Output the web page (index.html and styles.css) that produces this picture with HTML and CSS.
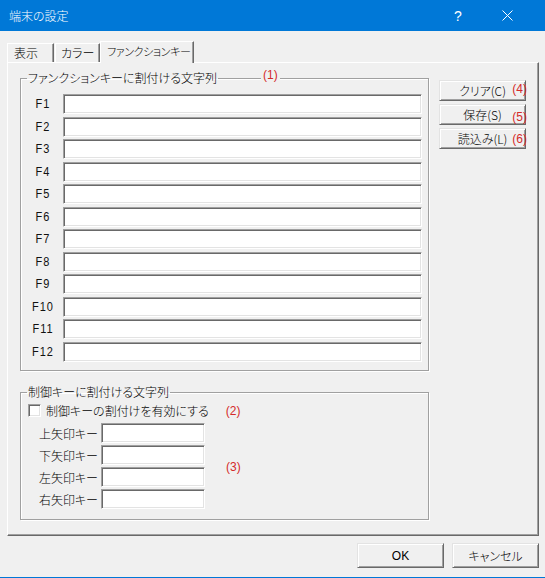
FILE: index.html
```html
<!DOCTYPE html>
<html lang="ja">
<head>
<meta charset="utf-8">
<title>端末の設定</title>
<link rel="stylesheet" href="styles.css">
</head>
<body>
<div class="window">
  <div class="titlebar">
    <span class="title">端末の設定</span>
    <span class="ctl help">?</span>
    <span class="ctl close"><svg width="11" height="11" viewBox="0 0 11 11"><path d="M0.5 0.5 L10.5 10.5 M10.5 0.5 L0.5 10.5" stroke="#fff" stroke-width="1" fill="none"/></svg></span>
  </div>
  <div class="tabs">
    <div class="tab t1">表示</div>
    <div class="tab t2">カラー</div>
    <div class="tab t3 active">ファンクションキー</div>
  </div>
  <div class="panel">
    <div class="leftcol">
      <fieldset class="group g1">
        <legend>ファンクションキーに割付ける文字列</legend>
        <span class="note n1">(1)</span>
        <div class="frows">
          <div class="frow"><span class="flabel">F1</span><span class="edit fedit"></span></div>
          <div class="frow"><span class="flabel">F2</span><span class="edit fedit"></span></div>
          <div class="frow"><span class="flabel">F3</span><span class="edit fedit"></span></div>
          <div class="frow"><span class="flabel">F4</span><span class="edit fedit"></span></div>
          <div class="frow"><span class="flabel">F5</span><span class="edit fedit"></span></div>
          <div class="frow"><span class="flabel">F6</span><span class="edit fedit"></span></div>
          <div class="frow"><span class="flabel">F7</span><span class="edit fedit"></span></div>
          <div class="frow"><span class="flabel">F8</span><span class="edit fedit"></span></div>
          <div class="frow"><span class="flabel">F9</span><span class="edit fedit"></span></div>
          <div class="frow"><span class="flabel">F10</span><span class="edit fedit"></span></div>
          <div class="frow"><span class="flabel">F11</span><span class="edit fedit"></span></div>
          <div class="frow"><span class="flabel">F12</span><span class="edit fedit"></span></div>
        </div>
      </fieldset>
      <fieldset class="group g2">
        <legend>制御キーに割付ける文字列</legend>
        <div class="checkrow">
          <span class="checkbox"></span>
          <span class="checktext">制御キーの割付けを有効にする</span>
          <span class="note n2">(2)</span>
        </div>
        <div class="arrowblock">
          <div class="arows">
            <div class="arow"><span class="alabel">上矢印キー</span><span class="edit aedit"></span></div>
            <div class="arow"><span class="alabel">下矢印キー</span><span class="edit aedit"></span></div>
            <div class="arow"><span class="alabel">左矢印キー</span><span class="edit aedit"></span></div>
            <div class="arow"><span class="alabel">右矢印キー</span><span class="edit aedit"></span></div>
          </div>
          <span class="note n3">(3)</span>
        </div>
      </fieldset>
    </div>
    <div class="rightcol">
      <div class="btn side">クリア(C)<span class="note bn b4">(4)</span></div>
      <div class="btn side">保存(S)<span class="note bn b5">(5)</span></div>
      <div class="btn side">読込み(L)<span class="note bn b6">(6)</span></div>
    </div>
  </div>
  <div class="footer">
    <div class="btn foot">OK</div>
    <div class="btn foot">キャンセル</div>
  </div>
</div>
</body>
</html>
```
FILE: styles.css
```css
* { box-sizing: border-box; }
html, body { margin: 0; padding: 0; }
body {
  font-family: "Noto Sans CJK JP", "Noto Sans", sans-serif;
  font-size: 12px;
  font-weight: 300;
  font-feature-settings: "palt";
  color: #000;
  background: #f0f0f0;
}
.window {
  width: 545px;
  height: 578px;
  background: #f0f0f0;
  border-bottom: 1px solid #0078d7;
  display: flex;
  flex-direction: column;
}
.titlebar {
  height: 31px;
  background: #0078d7;
  color: #fff;
  display: flex;
  align-items: center;
  flex: none;
}
.title {
  margin-left: 9px;
  font-size: 12px;
  flex: 1;
  line-height: 14px;
}
.ctl { display: flex; align-items: center; justify-content: center; }
.help { width: 14px; font-family: "Liberation Sans", sans-serif; font-size: 14px; font-weight: 400; margin-right: 37px; }
.close { width: 11px; margin-right: 32px; }
.tabs {
  display: flex;
  align-items: flex-end;
  height: 31px;
  padding-left: 7px;
  flex: none;
}
.tab {
  height: 19px;
  border-top: 1px solid #fff;
  border-left: 1px solid #fff;
  border-right: 1px solid #696969;
  box-shadow: inset -1px 0 #a0a0a0;
  line-height: 17px;
  padding-left: 6px;
  font-size: 12px;
  white-space: nowrap;
}
.t1 { width: 47px; }
.t2 { width: 45px; margin-left: 1px; padding-left: 5px; }
.t3 {
  width: 94px;
  height: 22px;
  margin-bottom: -1px;
  background: #f0f0f0;
  position: relative;
  z-index: 2;
  padding-left: 6px;
  line-height: 19px;
  font-size: 11px;
  letter-spacing: -0.4px;
}
.panel {
  margin-left: 7px;
  width: 532px;
  height: 474px;
  flex: none;
  border-top: 1px solid #fff;
  border-left: 1px solid #fff;
  border-right: 1px solid #696969;
  border-bottom: 1px solid #696969;
  box-shadow: inset -1px -1px #a0a0a0;
  display: flex;
  padding: 8px 0 0 12px;
  position: relative;
  z-index: 1;
}
.leftcol { display: flex; flex-direction: column; width: 409px; }
.group {
  margin: 0;
  padding: 0;
  border: 1px solid #a0a0a0;
  box-shadow: inset 1px 1px #fff, 1px 1px #fff;
  min-width: 0;
  position: relative;
}
.group legend {
  margin-left: 6px;
  padding: 0 1px;
  line-height: 14px;
  height: 14px;
  font-size: 12px;
  white-space: nowrap;
}
.g1 { height: 300px; }
.note { color: #d42a2a; font-size: 12px; font-weight: 400; line-height: 14px; font-family: "Liberation Sans", "Noto Sans CJK JP", sans-serif; }
.n1 {
  position: absolute;
  top: -17px;
  left: 240px;
  background: #f0f0f0;
  padding: 0 2px;
}
.frows {
  display: flex;
  flex-direction: column;
  gap: 2.5px;
  padding: 9px 6px 0 2px;
}
.frow { display: flex; align-items: center; height: 20px; }
.flabel {
  width: 40px;
  text-align: center;
  font-family: "Liberation Sans", sans-serif;
  font-weight: 400;
  font-size: 11px;
  letter-spacing: 1px;
  color: #111;
  transform: scaleY(1.1);
}
.edit {
  display: block;
  height: 20px;
  background: #fff;
  border: 1px solid;
  border-color: #a0a0a0 #fff #fff #a0a0a0;
  box-shadow: inset 1px 1px #696969, inset -1px -1px #e3e3e3;
}
.fedit { width: 359px; }
.g2 { margin-top: 14px; height: 135px; }
.checkrow {
  display: flex;
  align-items: center;
  height: 15px;
  margin-top: 4px;
  padding-left: 7px;
}
.checkbox {
  width: 13px;
  height: 13px;
  background: #fff;
  border: 1px solid;
  border-color: #a0a0a0 #fff #fff #a0a0a0;
  box-shadow: inset 1px 1px #696969, inset -1px -1px #e3e3e3;
}
.checktext { margin-left: 5px; }
.n2 { margin-left: 17px; }
.arrowblock { display: flex; align-items: center; margin-top: 5px; }
.arows { display: flex; flex-direction: column; gap: 2px; }
.arow { display: flex; align-items: center; height: 20px; }
.alabel { width: 80px; text-align: right; padding-right: 3px; }
.aedit { width: 104px; }
.n3 { margin-left: 21px; margin-top: 2px; }
.rightcol {
  display: flex;
  flex-direction: column;
  gap: 3px;
  margin-left: 10px;
  padding-top: 9px;
}
.btn {
  background: #f0f0f0;
  border: 1px solid;
  border-color: #e3e3e3 #696969 #696969 #e3e3e3;
  box-shadow: inset 1px 1px #fff, inset -1px -1px #a0a0a0;
  display: flex;
  align-items: center;
  justify-content: center;
  font-size: 12px;
}
.side { width: 87px; height: 21px; position: relative; }
.bn { position: absolute; right: -2px; background: transparent; }
.b4 { top: 1px; }
.b5 { top: 5px; }
.b6 { top: 3px; }
.footer {
  display: flex;
  justify-content: flex-end;
  gap: 8px;
  padding-right: 6px;
  margin-top: 7px;
}
.foot { width: 87px; height: 25px; }
.foot:first-child { font-family: "Liberation Sans", "Noto Sans CJK JP", sans-serif; font-weight: 400; }
```
